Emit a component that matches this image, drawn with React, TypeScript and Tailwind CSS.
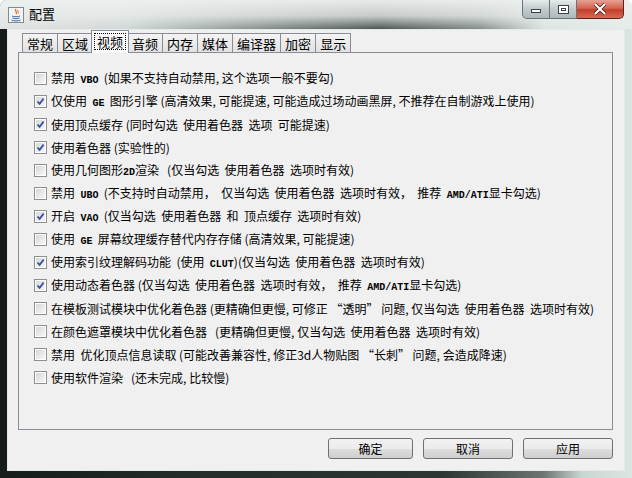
import React from "react";

type Part = string | { en: string };

const rows: { checked: boolean; parts: Part[] }[] = [
  { checked: false, parts: ["禁用  ", { en: "VBO" }, "  (如果不支持自动禁用, 这个选项一般不要勾)"] },
  { checked: true, parts: ["仅使用  ", { en: "GE" }, "  图形引擎 (高清效果, 可能提速, 可能造成过场动画黑屏, 不推荐在自制游戏上使用)"] },
  { checked: true, parts: ["使用顶点缓存 (同时勾选  使用着色器  选项  可能提速)"] },
  { checked: true, parts: ["使用着色器 (实验性的)"] },
  { checked: false, parts: ["使用几何图形", { en: "2D" }, "渲染   (仅当勾选  使用着色器  选项时有效)"] },
  { checked: false, parts: ["禁用  ", { en: "UBO" }, "  (不支持时自动禁用，  仅当勾选  使用着色器  选项时有效，  推荐  ", { en: "AMD/ATI" }, "显卡勾选)"] },
  { checked: true, parts: ["开启  ", { en: "VAO" }, "  (仅当勾选  使用着色器  和  顶点缓存  选项时有效)"] },
  { checked: false, parts: ["使用  ", { en: "GE" }, "  屏幕纹理缓存替代内存存储 (高清效果, 可能提速)"] },
  { checked: true, parts: ["使用索引纹理解码功能  (使用  ", { en: "CLUT" }, ")(仅当勾选  使用着色器  选项时有效)"] },
  { checked: true, parts: ["使用动态着色器 (仅当勾选  使用着色器  选项时有效，  推荐  ", { en: "AMD/ATI" }, "显卡勾选)"] },
  { checked: false, parts: ["在模板测试模块中优化着色器 (更精确但更慢, 可修正 “透明” 问题, 仅当勾选  使用着色器  选项时有效)"] },
  { checked: false, parts: ["在颜色遮罩模块中优化着色器   (更精确但更慢, 仅当勾选  使用着色器  选项时有效)"] },
  { checked: false, parts: ["禁用  优化顶点信息读取 (可能改善兼容性, 修正3d人物贴图 “长刺” 问题, 会造成降速)"] },
  { checked: false, parts: ["使用软件渲染   (还未完成, 比较慢)"] },
];

const tabs = ["常规", "区域", "视频", "音频", "内存", "媒体", "编译器", "加密", "显示"];

function Checkbox({ checked }: { checked: boolean }) {
  return (
    <div className="w-[13px] h-[13px] shrink-0 border border-[#8f8f8f] bg-white p-px">
      <div className="w-full h-full bg-[linear-gradient(135deg,#d8d8d8,#f6f6f6)] relative">
        {checked && (
          <svg width="11" height="11" viewBox="0 0 11 11" className="absolute -left-px -top-px">
            <path d="M2.5 5.5 L4.6 7.8 L8.6 2.6" fill="none" stroke="#3552a0" strokeWidth="1.8" />
          </svg>
        )}
      </div>
    </div>
  );
}

function JavaIcon() {
  return (
    <svg width="16" height="16" viewBox="0 0 16 16">
      <rect x="0.5" y="0.5" width="15" height="15" fill="#f4f4f4" stroke="#7a8a9a" />
      <path d="M8 2 C6 4 10 5 8 7" fill="none" stroke="#e06a1a" strokeWidth="1.3" />
      <path d="M10 3 C9 4.5 11 5 10 6.5" fill="none" stroke="#e06a1a" strokeWidth="1" />
      <path d="M4 9 C6 10 10 10 12 9 M4.5 11 C6.5 12 9.5 12 11.5 11 M3.5 13.2 C6 14.2 10 14.2 12.5 13.2" fill="none" stroke="#3a6ab0" strokeWidth="1" />
    </svg>
  );
}

export default function App() {
  return (
    <div
      className="w-[632px] h-[478px] flex flex-col rounded-t-[7px] overflow-hidden bg-[linear-gradient(to_right,#161c1a_0%,#252d2a_30%,#2e3633_70%,#6b7572_86%,#c8d6d2_92%,#dbe5e2_100%)] font-['Noto_Sans_CJK_SC',sans-serif]"
    >
      <div className="h-[29px] shrink-0 flex items-start relative bg-[linear-gradient(to_bottom,rgba(236,240,239,0.97),rgba(232,236,235,0.8)_55%,rgba(220,226,224,0.1)_100%),linear-gradient(to_right,#dfe4e3_0%,#d0d6d5_20%,#8a9390_38%,#3e4643_60%,#7d8784_76%,#dce5e2_86%,#e6eeeb_100%)]">
        <div className="ml-[8px] mt-[7px]">
          <JavaIcon />
        </div>
        <div className="ml-[5px] mt-[6px] text-[13px] leading-[16px] text-black">配置</div>
        <div className="ml-auto mr-[8px] flex h-[19px]">
          <div className="w-[28px] h-[19px] rounded-bl-[5px] border border-t-0 border-[#6b7377] bg-[linear-gradient(to_bottom,#e6ebec,#c2cacd_50%,#aeb8bc)] flex items-center justify-center">
            <div className="w-[10px] h-[4px] mt-[4px] border border-[#3b4246] bg-white" />
          </div>
          <div className="w-[27px] h-[19px] border border-t-0 border-l-0 border-[#6b7377] bg-[linear-gradient(to_bottom,#e6ebec,#c2cacd_50%,#aeb8bc)] flex items-center justify-center">
            <div className="w-[11px] h-[9px] border border-[#3b4246] bg-white flex items-center justify-center">
              <div className="w-[5px] h-[3px] border border-[#3b4246]" />
            </div>
          </div>
          <div className="w-[47px] h-[19px] rounded-br-[5px] border border-t-0 border-l-0 border-[#5a2320] bg-[linear-gradient(to_bottom,#e8a293,#d2654f_45%,#c13f2b_55%,#d86a55)] flex items-center justify-center">
            <svg width="14" height="12" viewBox="0 0 14 12">
              <path d="M2 1 L12 11 M12 1 L2 11" stroke="#3a1a16" strokeWidth="3.6" />
              <path d="M2 1 L12 11 M12 1 L2 11" stroke="#ffffff" strokeWidth="2.2" />
            </svg>
          </div>
        </div>
      </div>

      <div className="mx-[7px] h-[442px] border border-[#e4eae8] bg-[#f0f0f0] flex flex-col pl-[10px] pr-[11px]">
        <div className="h-[22px] flex items-end pl-[4px]">
          {tabs.map((t, i) =>
            t === "视频" ? (
              <div
                key={t}
                className="-mx-[2px] -mb-px h-[23px] relative z-10 border border-b-0 border-[#898c95] bg-[#fbfbfb] px-[2px] pt-[2px] text-[13px] leading-none text-black"
              >
                <div className="border border-dotted border-black px-[2px] py-[1px]">{t}</div>
              </div>
            ) : (
              <div
                key={t}
                className={
                  "h-[19px] border border-b-0 border-[#898c95] bg-[linear-gradient(to_bottom,#f4f4f4,#e2e2e2)] px-[4px] flex items-center text-[13px] leading-none text-black " +
                  (i > 0 && tabs[i - 1] !== "视频" ? "-ml-px" : "")
                }
              >
                {t}
              </div>
            )
          )}
        </div>
        <div className="h-[378px] border border-[#898c95] bg-[#f0f0f0] pt-[14px] pl-[15px]">
          {rows.map((r, i) => (
            <div key={i} className="h-[23px] flex items-center gap-[4px]">
              <Checkbox checked={r.checked} />
              <div className="text-[12px] leading-none text-black whitespace-pre">
                {r.parts.map((p, j) =>
                  typeof p === "string" ? (
                    <span key={j}>{p}</span>
                  ) : (
                    <span key={j} className="font-['Liberation_Mono',monospace] text-[10px] font-bold">
                      {p.en}
                    </span>
                  )
                )}
              </div>
            </div>
          ))}
        </div>
        <div className="flex justify-end gap-[10px] mt-[8px]">
          {[
            ["确定", "w-[85px]"],
            ["取消", "w-[90px]"],
            ["应用", "w-[90px]"],
          ].map(([label, w]) => (
            <div
              key={label}
              className={
                w +
                " h-[21px] rounded-[3px] border border-[#707070] bg-[linear-gradient(to_bottom,#f2f2f2,#ebebeb_50%,#dddddd_51%,#cfcfcf)] flex items-center justify-center text-[12px] leading-none text-black"
              }
            >
              {label}
            </div>
          ))}
        </div>
      </div>
    </div>
  );
}
